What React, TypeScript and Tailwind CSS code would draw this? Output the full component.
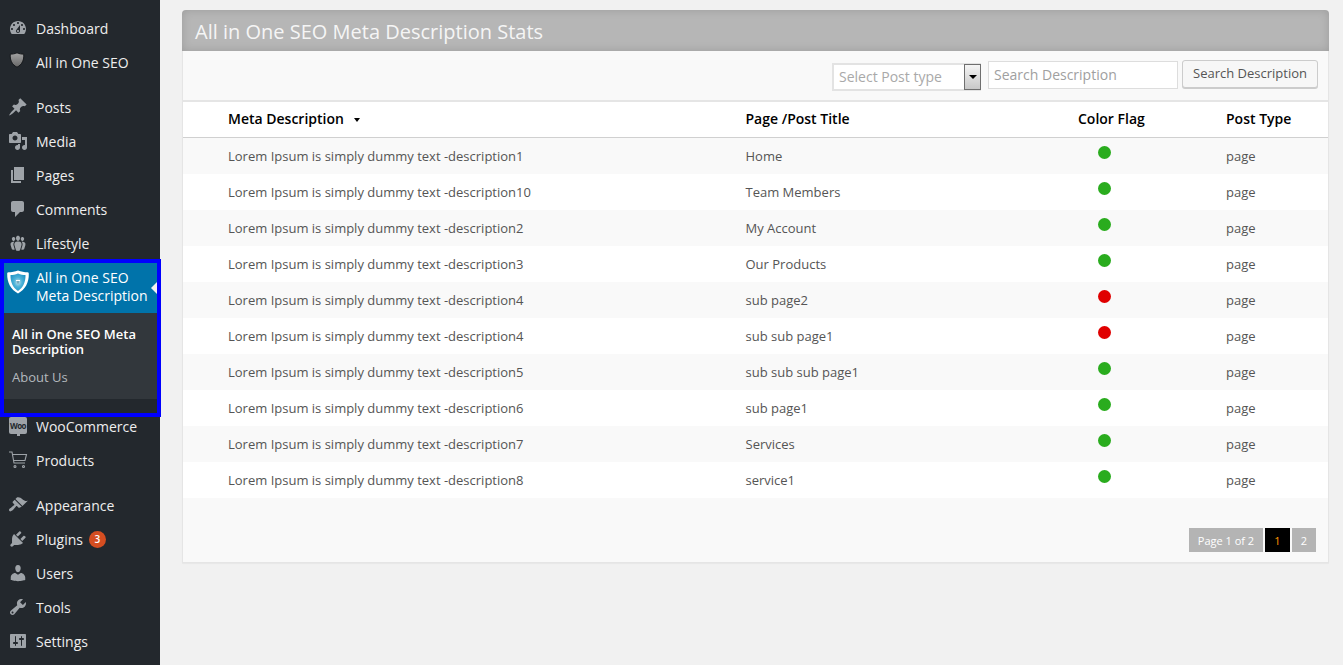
import type { ReactNode } from 'react';

const dash: Record<string, string> = {
  dashboard:
    'M3.76 16h12.48c1.1-1.37 1.76-3.11 1.76-5 0-4.42-3.58-8-8-8s-8 3.58-8 8c0 1.89.66 3.63 1.76 5zM10 4c.55 0 1 .45 1 1s-.45 1-1 1-1-.45-1-1 .45-1 1-1zM6 6c.55 0 1 .45 1 1s-.45 1-1 1-1-.45-1-1 .45-1 1-1zm8 0c.55 0 1 .45 1 1s-.45 1-1 1-1-.45-1-1 .45-1 1-1zm-5.37 5.55L12 7v6c0 1.1-.9 2-2 2s-2-.9-2-2c0-.57.24-1.08.63-1.45zM4 10c.55 0 1 .45 1 1s-.45 1-1 1-1-.45-1-1 .45-1 1-1zm12 0c.55 0 1 .45 1 1s-.45 1-1 1-1-.45-1-1 .45-1 1-1zm-5 3c0-.55-.45-1-1-1s-1 .45-1 1 .45 1 1 1 1-.45 1-1z',
  posts:
    'M10.44 3.02l1.82-1.82 6.36 6.35-1.83 1.82c-1.05-.68-2.48-.57-3.41.36l-.75.75c-.92.93-1.04 2.35-.35 3.41l-1.83 1.82-2.41-2.41-2.8 2.79c-.42.42-3.38 2.71-3.8 2.29s1.86-3.39 2.28-3.81l2.79-2.79L4.1 9.36l1.83-1.82c1.05.69 2.48.57 3.4-.36l.75-.75c.93-.92 1.05-2.35.36-3.41z',
  media:
    'M13 11V4c0-.55-.45-1-1-1h-1.67L9 1H5L3.67 3H2c-.55 0-1 .45-1 1v7c0 .55.45 1 1 1h10c.55 0 1-.45 1-1zM7 4.5c1.38 0 2.5 1.12 2.5 2.5S8.38 9.5 7 9.5 4.5 8.38 4.5 7 5.62 4.5 7 4.5zM14 6h5v10.5c0 1.38-1.12 2.5-2.5 2.5S14 17.88 14 16.5s1.12-2.5 2.5-2.5c.17 0 .34.02.5.05V9h-3V6zm-4 8.05V13h2v3.5c0 1.38-1.12 2.5-2.5 2.5S7 17.88 7 16.5 8.12 14 9.5 14c.17 0 .34.02.5.05z',
  pages: 'M6 15V2h10v13H6zm-1 1h8v2H3V5h2v11z',
  comments: 'M5 2h9c1.1 0 2 .9 2 2v7c0 1.1-.9 2-2 2h-2l-5 5v-5H5c-1.1 0-2-.9-2-2V4c0-1.1.9-2 2-2z',
  groups:
    'M8.03 4.46c-.29 1.28.55 3.46 1.97 3.46 1.41 0 2.25-2.18 1.96-3.46-.22-.98-1.08-1.63-1.96-1.63-.89 0-1.74.65-1.97 1.63zm-4.13.9c-.25 1.08.47 2.93 1.67 2.93s1.92-1.85 1.67-2.93c-.19-.83-.92-1.39-1.67-1.39s-1.48.56-1.67 1.39zm8.86 0c-.25 1.08.47 2.93 1.66 2.93 1.2 0 1.92-1.85 1.67-2.93-.19-.83-.92-1.39-1.67-1.39-.74 0-1.47.56-1.66 1.39zm-.59 11.43l1.25-4.3C14.2 10 12.71 8.47 10 8.47c-2.72 0-4.21 1.53-3.44 4.02l1.26 4.3C8.05 17.51 9 18 10 18c.98 0 1.94-.49 2.17-1.21zm-6.1-7.63c-.49.67-.96 1.83-.42 3.59l1.12 3.79c-.34.2-.77.31-1.2.31-.85 0-1.65-.41-1.85-1.03l-1.07-3.65c-.65-2.11.61-3.4 2.92-3.4.27 0 .54.02.79.06-.1.1-.2.22-.29.33zm8.35-.39c2.31 0 3.58 1.29 2.92 3.4l-1.07 3.65c-.2.62-1 1.03-1.85 1.03-.43 0-.86-.11-1.2-.31l1.11-3.77c.55-1.78.08-2.94-.42-3.61-.08-.11-.18-.23-.28-.33.25-.04.51-.06.79-.06z',
  appearance:
    'M14.48 11.06L7.41 3.99l1.5-1.5c.5-.56 2.3-.47 3.51.32 1.21.8 1.43 1.28 2.91 2.1 1.18.64 2.45 1.26 4.45.85zm-.71.71L6.7 4.7 4.93 6.47c-.39.39-.39 1.02 0 1.41l1.06 1.06c.39.39.39 1.03 0 1.42-.6.6-1.43 1.11-2.21 1.69-.35.26-.7.53-1.01.84C1.43 13.23.4 14.99 1.4 15.98c.99 1 2.66-.03 3.99-1.36.31-.31.58-.66.84-1.01.58-.78 1.09-1.61 1.69-2.21.39-.39 1.02-.39 1.41 0l1.06 1.06c.39.39 1.02.39 1.41 0z',
  plugins:
    'M13.11 4.36L9.87 7.6 8 5.73l3.24-3.24c.35-.34 1.05-.2 1.56.32.52.51.66 1.21.31 1.55zm-8 1.77l.91-1.12 9.01 9.01-1.19.84c-.71.71-2.63 1.16-3.82 1.16H6.14L4.9 17.26c-.59.59-1.54.59-2.12 0-.59-.58-.59-1.53 0-2.12l1.24-1.24v-3.88c0-1.13.4-3.19 1.09-3.89zm7.26 3.97l3.24-3.24c.34-.35 1.04-.21 1.55.31.52.51.66 1.21.31 1.55l-3.24 3.25z',
  users:
    'M10 9.25c-2.27 0-2.73-3.44-2.73-3.44C7 4.02 7.82 2 9.97 2c2.16 0 2.98 2.02 2.71 3.81 0 0-.41 3.44-2.68 3.44zm0 2.57L12.72 10c2.39 0 4.52 2.33 4.52 4.53v2.49s-3.65 1.13-7.24 1.13c-3.65 0-7.24-1.13-7.24-1.13v-2.49c0-2.25 1.94-4.48 4.47-4.48z',
  tools:
    'M16.68 9.77c-1.34 1.34-3.3 1.67-4.95.99l-5.41 6.52c-.99.99-2.59.99-3.58 0s-.99-2.59 0-3.57l6.52-5.42c-.68-1.65-.35-3.61.99-4.95 1.28-1.28 3.12-1.62 4.72-1.06l-2.89 2.89 2.82 2.82 2.86-2.87c.53 1.58.18 3.39-1.08 4.65zM3.81 16.21c.4.39 1.04.39 1.43 0 .4-.4.4-1.04 0-1.43-.39-.4-1.03-.4-1.43 0-.39.39-.39 1.03 0 1.43z',
  settings:
    'M18 16V4c0-.55-.45-1-1-1H3c-.55 0-1 .45-1 1v12c0 .55.45 1 1 1h14c.55 0 1-.45 1-1zM8 11h1c.55 0 1 .45 1 1s-.45 1-1 1H8v1.5c0 .28-.22.5-.5.5s-.5-.22-.5-.5V13H6c-.55 0-1-.45-1-1s.45-1 1-1h1V5.5c0-.28.22-.5.5-.5s.5.22.5.5V11zm5-2h-1c-.55 0-1-.45-1-1s.45-1 1-1h1V5.5c0-.28.22-.5.5-.5s.5.22.5.5V7h1c.55 0 1 .45 1 1s-.45 1-1 1h-1v5.5c0 .28-.22.5-.5.5s-.5-.22-.5-.5V9z',
};

function Dashicon({ name }: { name: string }) {
  return (
    <svg viewBox="0 0 20 20" className="h-5 w-5 fill-[#9ea3a8]" aria-hidden>
      <path d={dash[name]} />
    </svg>
  );
}

function GreyShield() {
  return (
    <svg viewBox="0 0 16 16" className="-ml-[3px] -mt-[4px] h-4 w-4" aria-hidden>
      <defs>
        <linearGradient id="greyShield" x1="0" y1="0" x2="0" y2="1">
          <stop offset="0" stopColor="#a4a4a4" />
          <stop offset="1" stopColor="#666666" />
        </linearGradient>
      </defs>
      <path d="M8 .8c2.200 1 4.400 1.300 6.700 1.300.6 5.400-1.500 10.700-6.700 13.100C2.800 12.800.7 7.500 1.300 2.100 3.600 2.100 5.800 1.800 8 .8z" fill="url(#greyShield)" stroke="#15181b" strokeWidth="1" />
    </svg>
  );
}

function BlueShield() {
  return (
    <svg viewBox="0 0 22 24" className="h-6 w-[22px]" aria-hidden>
      <defs>
        <radialGradient id="blueShield" cx="0.5" cy="0.5" r="0.6">
          <stop offset="0" stopColor="#c2dfe9" />
          <stop offset="0.45" stopColor="#4bb2d8" />
          <stop offset="1" stopColor="#1f93c4" />
        </radialGradient>
      </defs>
      <path d="M11 .5c3 1.200 6.500 1.800 9.500 1.800 1.200 0 1.300.7 1.300 1.700.2 8.500-3.500 15.500-10.800 19.500C3.700 19.500 0 12.500.2 4c0-1 .1-1.700 1.300-1.700 3 0 6.500-.6 9.500-1.800z" fill="#ffffff" />
      <path d="M11 3.500c2.600 1 5 1.500 7.500 1.600.2 6.800-2.200 12.500-7.500 15.800C5.700 17.600 3.300 11.900 3.500 5.100 6 5 8.400 4.500 11 3.500z" fill="url(#blueShield)" />
      <rect x="9" y="10" width="4" height="1" fill="#ffffff" />
      <rect x="10.400" y="11" width="1.200" height="2.500" fill="#5a8ca3" />
    </svg>
  );
}

function WooIcon() {
  return (
    <div className="relative -mt-[1px] flex h-[17px] w-[18px] items-center justify-center rounded-[2px] bg-[#9ea3a8] text-[8px] font-bold leading-none tracking-[-0.5px] text-[#23282d]">
      Woo
      <span className="absolute -bottom-[2px] left-[8px] h-[3px] w-[3px] bg-[#9ea3a8]" />
    </div>
  );
}

function CartIcon() {
  return (
    <svg viewBox="0 0 20 20" className="h-5 w-5 fill-none stroke-[#9ea3a8]" strokeWidth="1.100" aria-hidden>
      <path d="M1 2h3l2 11h11" />
      <path d="M4.500 4.500H18.500L17 10.500H5.500" />
      <circle cx="7" cy="16.500" r="1" />
      <circle cx="15.500" cy="16.500" r="1" />
    </svg>
  );
}

function MenuItem({ icon, children }: { icon: ReactNode; children: ReactNode }) {
  return (
    <div className="flex h-[34px] items-center text-[14px] text-[#eeeeee]">
      <div className="flex w-[36px] shrink-0 items-center justify-center">{icon}</div>
      <div className="flex items-center">{children}</div>
    </div>
  );
}

function Sidebar() {
  return (
    <aside className="w-[160px] shrink-0 bg-[#23282d] pt-[11px]">
      <MenuItem icon={<Dashicon name="dashboard" />}>Dashboard</MenuItem>
      <MenuItem icon={<GreyShield />}>All in One SEO</MenuItem>
      <div className="h-[11px]" />
      <MenuItem icon={<Dashicon name="posts" />}>Posts</MenuItem>
      <MenuItem icon={<Dashicon name="media" />}>Media</MenuItem>
      <MenuItem icon={<Dashicon name="pages" />}>Pages</MenuItem>
      <MenuItem icon={<Dashicon name="comments" />}>Comments</MenuItem>
      <MenuItem icon={<Dashicon name="groups" />}>Lifestyle</MenuItem>

      {/* highlighted block, blue frame spills over the neighbours */}
      <div className="relative z-10 -mb-[8px] -mt-[1px] h-[158px] w-[161px] border-4 border-[#0000ff]">
        <div className="relative flex h-[50px] bg-[#0073aa] text-[14px] leading-[18px] text-white">
          <div className="w-[32px] shrink-0 pl-[3px] pt-[7px]">
            <BlueShield />
          </div>
          <div className="pt-[6px]">
            All in One SEO
            <br />
            Meta Description
          </div>
          <span className="absolute right-0 top-[19px] h-0 w-0 border-y-[6px] border-r-[6px] border-y-transparent border-r-[#f1f1f1]" />
        </div>
        <div className="h-[86px] bg-[#32373c] px-[8px] pt-[14px] text-[13px] leading-[15px]">
          <div className="font-semibold text-white">All in One SEO Meta Description</div>
          <div className="mt-[13px] text-[#b4b9be]">About Us</div>
        </div>
      </div>

      <MenuItem icon={<WooIcon />}>WooCommerce</MenuItem>
      <MenuItem icon={<CartIcon />}>Products</MenuItem>
      <div className="h-[11px]" />
      <MenuItem icon={<Dashicon name="appearance" />}>Appearance</MenuItem>
      <MenuItem icon={<Dashicon name="plugins" />}>
        Plugins
        <span className="ml-[6px] flex h-[17px] w-[17px] items-center justify-center rounded-full bg-[#d54e21] text-[10px] font-semibold text-white">
          3
        </span>
      </MenuItem>
      <MenuItem icon={<Dashicon name="users" />}>Users</MenuItem>
      <MenuItem icon={<Dashicon name="tools" />}>Tools</MenuItem>
      <MenuItem icon={<Dashicon name="settings" />}>Settings</MenuItem>
    </aside>
  );
}

const rows = [
  ['Lorem Ipsum is simply dummy text -description1', 'Home', 'green'],
  ['Lorem Ipsum is simply dummy text -description10', 'Team Members', 'green'],
  ['Lorem Ipsum is simply dummy text -description2', 'My Account', 'green'],
  ['Lorem Ipsum is simply dummy text -description3', 'Our Products', 'green'],
  ['Lorem Ipsum is simply dummy text -description4', 'sub page2', 'red'],
  ['Lorem Ipsum is simply dummy text -description4', 'sub sub page1', 'red'],
  ['Lorem Ipsum is simply dummy text -description5', 'sub sub sub page1', 'green'],
  ['Lorem Ipsum is simply dummy text -description6', 'sub page1', 'green'],
  ['Lorem Ipsum is simply dummy text -description7', 'Services', 'green'],
  ['Lorem Ipsum is simply dummy text -description8', 'service1', 'green'],
];

function Toolbar() {
  return (
    <div className="flex h-[49px] items-start justify-end bg-[#f9f9f9] pr-[10px] pt-[9px] text-[14px]">
      <div className="mt-[3px] flex h-[28px] w-[149px] items-center justify-between border-2 border-[#e3e3e3] bg-white text-[#a9a9a9]">
        <span className="pb-[2px] pl-[5px]">Select Post type</span>
        <span className="-mr-[2px] flex h-[26px] w-[17px] items-center justify-center border border-[#6f6f6f] bg-gradient-to-b from-[#f5f5f5] to-[#c8c8c8]">
          <span className="h-0 w-0 border-x-[4px] border-t-[4px] border-x-transparent border-t-black" />
        </span>
      </div>
      <input
        placeholder="Search Description"
        className="ml-[7px] mt-[1px] h-[28px] w-[190px] border border-[#dddddd] bg-white px-[5px] pb-[2px] text-[14px] outline-none placeholder:text-[#a0a0a0]"
      />
      <button className="ml-[4px] h-[28px] w-[136px] rounded-[3px] border border-[#cccccc] bg-[#f7f7f7] text-[13px] text-[#555555] shadow-[0_1px_0_#cccccc]">
        Search Description
      </button>
    </div>
  );
}

const thCls = 'h-[38px] border-b border-t-2 border-b-[#d0d0d0] border-t-[#e5e5e5] pb-[2px] font-semibold';

function StatsTable() {
  return (
    <table className="w-full table-fixed border-separate border-spacing-0 text-left">
      <colgroup>
        <col className="w-[562.5px]" />
        <col className="w-[332.5px]" />
        <col className="w-[148px]" />
        <col />
      </colgroup>
      <thead>
        <tr className="bg-white text-[14px] text-black">
          <th className={thCls + ' pl-[45px]'}>
            Meta Description
            <span className="ml-[10px] inline-block h-0 w-0 -translate-y-[2px] border-x-[3px] border-t-[4px] border-x-transparent border-t-black" />
          </th>
          <th className={thCls}>Page /Post Title</th>
          <th className={thCls}>Color Flag</th>
          <th className={thCls}>Post Type</th>
        </tr>
      </thead>
      <tbody className="text-[13px] text-[#555555]">
        {rows.map(([desc, title, flag], i) => (
          <tr key={i} className={i % 2 === 0 ? 'h-[36px] bg-[#f9f9f9]' : 'h-[36px] bg-white'}>
            <td className="pl-[45px] pt-[2px]">{desc}</td>
            <td className="pt-[2px]">{title}</td>
            <td>
              <div
                className={
                  flag === 'green'
                    ? 'ml-[20px] -mt-[7px] h-[13px] w-[13px] rounded-full bg-[#2aac1e]'
                    : 'ml-[20px] -mt-[7px] h-[13px] w-[13px] rounded-full bg-[#e00000]'
                }
              />
            </td>
            <td className="pt-[2px]">page</td>
          </tr>
        ))}
      </tbody>
    </table>
  );
}

function Pagination() {
  return (
    <div className="flex justify-end gap-[2px] pr-[12px] pt-[30px] text-[11px] text-white">
      <div className="flex h-[24px] w-[74px] items-center justify-center bg-[#b4b4b4] pt-[2px]">Page 1 of 2</div>
      <div className="flex h-[24px] w-[25px] items-center justify-center bg-black pt-[2px] text-[#ff9900]">1</div>
      <div className="flex h-[24px] w-[24px] items-center justify-center bg-[#b4b4b4] pt-[2px]">2</div>
    </div>
  );
}

export default function App() {
  return (
    <div className="flex h-[665px] w-[1343px] overflow-hidden bg-[#f1f1f1] font-['Open_Sans',sans-serif]">
      <Sidebar />
      <main className="flex-1 pl-[22px] pr-[14px] pt-[10px]">
        <div className="h-[553px] rounded-t-[4px] border-x border-b border-x-[#e5e5e5] border-b-[#e5e5e5] bg-[#f9f9f9] shadow-[0_1px_1px_rgba(0,0,0,0.04)]">
          <div className="-mx-px flex h-[41px] items-center rounded-t-[4px] bg-[#b6b6b6] pl-[13px] pt-[3px] text-[20px] text-[#f5f5f5] shadow-[inset_0_0_10px_rgba(0,0,0,0.14)]">
            All in One SEO Meta Description Stats
          </div>
          <Toolbar />
          <StatsTable />
          <Pagination />
        </div>
      </main>
    </div>
  );
}
